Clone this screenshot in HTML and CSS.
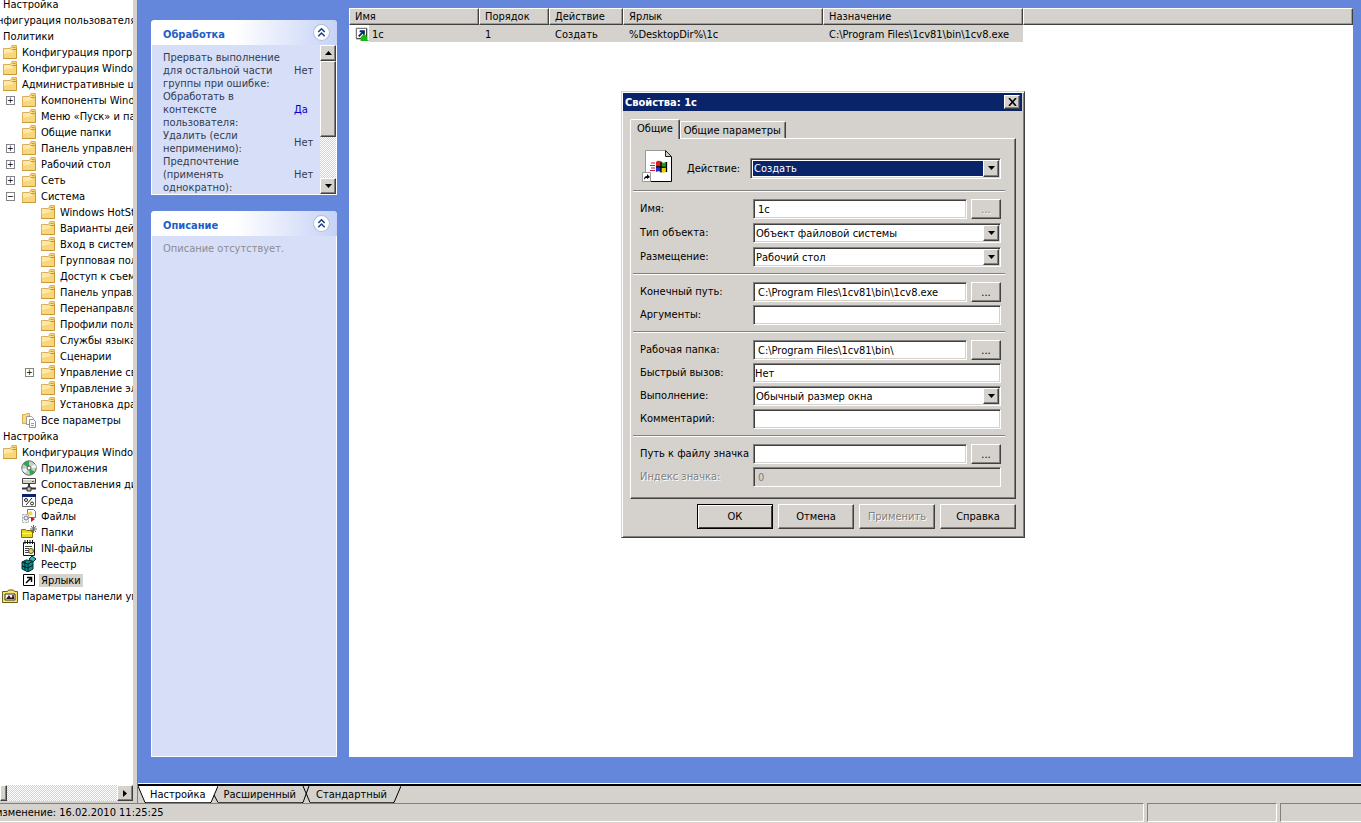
FILE: index.html
```html
<!DOCTYPE html>
<html lang="ru">
<head>
    <meta charset="UTF-8">
    <meta name="viewport" content="width=device-width, initial-scale=1.0">
    <title>Свойства: 1c</title>
    <link rel="stylesheet" href="styles.css">
</head>
<body>
    <svg class="sprite" aria-hidden="true">
        <symbol id="folder" viewBox="0 0 16 16">
            <path d="M1.500 4.500h7l1.500-3h4.500v13h-13z" fill="#f9d67a" stroke="#dcb05a"/>
            <path d="M2 5h7l2-2v5l-9 2z" fill="#fde9a8"/>
            <path d="M9.500 5.500h4.500M10.500 3.500h3" stroke="#a3a468" fill="none"/>
            <path d="M1 14.500h13.500V4" stroke="#c99a3c" fill="none"/>
        </symbol>
        <symbol id="all" viewBox="0 0 16 16">
            <path d="M1.500 2.500h3l1-1h3v10h-7z" fill="#fbdc7c" stroke="#d9ab4e"/>
            <path d="M5.500 4.500h5l2 2v6h-7z" fill="#fff" stroke="#a09a90"/>
            <path d="M8.500 7.500h4l2 2v6h-6z" fill="#fff" stroke="#8b93a5"/>
            <path d="M10 11.500h3M10 13.500h3" stroke="#7aa0d8"/>
        </symbol>
        <symbol id="disc" viewBox="0 0 16 16">
            <circle cx="8" cy="8" r="7.200" fill="#c4cfc9" stroke="#666"/>
            <path d="M8 8L2 4a7 7 0 0 1 6-3zM8 8l6 4a7 7 0 0 1-5 3z" fill="#2fa54c"/>
            <path d="M8 8l6-4a7 7 0 0 1 1 4zM8 8l-7 1a7 7 0 0 0 3 4z" fill="#eef6f2"/>
            <circle cx="8" cy="8" r="2" fill="#fff" stroke="#555"/>
        </symbol>
        <symbol id="drive" viewBox="0 0 16 16">
            <path d="M1.500 2.500h13v5h-13z" fill="#d4d0c8" stroke="#444"/>
            <path d="M2 3.500h12" stroke="#fff"/><path d="M11 5.500h2" stroke="#0a0"/>
            <path d="M8 8v4M1 12.500h14" stroke="#333" stroke-width="2"/>
            <path d="M6 11h4v4H6z" fill="#bbb" stroke="#333"/>
        </symbol>
        <symbol id="env" viewBox="0 0 16 16">
            <path d="M1.500 2.500h13v12h-13z" fill="#fff" stroke="#666"/>
            <path d="M1 2h14v3H1z" fill="#0a246a"/>
            <path d="M5 13l6-7" stroke="#222"/>
            <circle cx="5" cy="8" r="1.500" fill="none" stroke="#222"/><circle cx="11" cy="11.500" r="1.500" fill="none" stroke="#222"/>
        </symbol>
        <symbol id="files" viewBox="0 0 16 16">
            <path d="M6.500 1.500h6l2 2v6h-8z" fill="#fff" stroke="#777"/>
            <path d="M1.500 6.500h6v8h-6z" fill="#f8f4e0" stroke="#aaa" stroke-dasharray="2 1"/>
            <path d="M6 5l4-2 2 3-3 2z" fill="#f6d34a"/><circle cx="5" cy="10" r="2" fill="none" stroke="#6a78b0"/>
            <path d="M10 9l4 2-4 3z" fill="#c3162a"/>
        </symbol>
        <symbol id="folders" viewBox="0 0 16 16">
            <path d="M.500 5.500h4l1 1h6v7H.500z" fill="#e8d820" stroke="#807400"/>
            <path d="M1 9.500h10" stroke="#fff59a"/>
            <path d="M12.500 1v8M9 5h7M10 2l5 6M15 2l-5 6" stroke="#666"/>
        </symbol>
        <symbol id="ini" viewBox="0 0 16 16">
            <path d="M2.500 2.500h11v13h-11z" fill="#fff" stroke="#111"/>
            <path d="M4 0v4M6.500 0v4M9 0v4M11.500 0v4" stroke="#111"/>
            <path d="M4 6.500h7M4 8.500h4M4 10.500h4M4 12.500h4" stroke="#444"/>
            <circle cx="10" cy="11" r="2.500" fill="#e6d84a" stroke="#555"/>
        </symbol>
        <symbol id="registry" viewBox="0 0 16 16">
            <path d="M1 6l4-2 7 1v8l-5 3-6-3z" fill="#128a8a" stroke="#033"/>
            <path d="M8 3l3-3 4 3-3 3z" fill="#27b7b7" stroke="#033"/>
            <path d="M1 6l6 2 5-3M7 8v8M4 5v9M1 10l6 2 5-3" stroke="#022" fill="none"/>
        </symbol>
        <symbol id="shortcut" viewBox="0 0 16 16">
            <path d="M2.500 2.500h11v11h-11z" fill="#fff" stroke="#000"/>
            <path d="M5 11l5-5M6 5.500h4.500V10" stroke="#000" stroke-width="1.500" fill="none"/>
        </symbol>
        <symbol id="panel" viewBox="0 0 16 16">
            <path d="M.500 3.500h5l1 -1.500h5l1 1.500h3v11H.500z" fill="#f7e36a" stroke="#6b6218"/>
            <path d="M3 6h10v6H3z" fill="#fff" stroke="#333"/>
            <path d="M4 11l3-4 2 3 3-3v4z" fill="#222"/><path d="M10 7h2v2h-2z" fill="#d02020"/>
        </symbol>
        <symbol id="chevrons" viewBox="0 0 16 16">
            <circle cx="8" cy="8" r="7.500" fill="#fff" stroke="#b3bede"/>
            <path d="M5 7.500l3-3 3 3M5 11.500l3-3 3 3" fill="none" stroke="#1c3f8c" stroke-width="1.500"/>
        </symbol>
        <symbol id="down" viewBox="0 0 7 4"><path d="M0 0h7L3.500 4z"/></symbol>
    </svg>

    <main class="console">
        <nav class="tree-pane">
            <ul class="tree">
                <li><ul>
                    <li><span class="node">Настройка</span></li>
                </ul></li>
                <li><span class="node">Конфигурация пользователя</span>
                <ul>
                    <li><span class="node">Политики</span>
                    <ul>
                        <li><span class="node"><svg><use href="#folder"/></svg>Конфигурация программ</span></li>
                        <li><span class="node"><svg><use href="#folder"/></svg>Конфигурация Windows</span></li>
                        <li><span class="node"><svg><use href="#folder"/></svg>Административные шаблоны</span>
                        <ul>
                            <li><span class="node"><button class="expander">+</button><svg><use href="#folder"/></svg>Компоненты Windows</span></li>
                            <li><span class="node"><svg><use href="#folder"/></svg>Меню «Пуск» и панель задач</span></li>
                            <li><span class="node"><svg><use href="#folder"/></svg>Общие папки</span></li>
                            <li><span class="node"><button class="expander">+</button><svg><use href="#folder"/></svg>Панель управления</span></li>
                            <li><span class="node"><button class="expander">+</button><svg><use href="#folder"/></svg>Рабочий стол</span></li>
                            <li><span class="node"><button class="expander">+</button><svg><use href="#folder"/></svg>Сеть</span></li>
                            <li><span class="node"><button class="expander">−</button><svg><use href="#folder"/></svg>Система</span>
                            <ul>
                                <li><span class="node"><svg><use href="#folder"/></svg>Windows HotStart</span></li>
                                <li><span class="node"><svg><use href="#folder"/></svg>Варианты действий</span></li>
                                <li><span class="node"><svg><use href="#folder"/></svg>Вход в систему</span></li>
                                <li><span class="node"><svg><use href="#folder"/></svg>Групповая политика</span></li>
                                <li><span class="node"><svg><use href="#folder"/></svg>Доступ к съемным</span></li>
                                <li><span class="node"><svg><use href="#folder"/></svg>Панель управления</span></li>
                                <li><span class="node"><svg><use href="#folder"/></svg>Перенаправление</span></li>
                                <li><span class="node"><svg><use href="#folder"/></svg>Профили пользователей</span></li>
                                <li><span class="node"><svg><use href="#folder"/></svg>Службы языка</span></li>
                                <li><span class="node"><svg><use href="#folder"/></svg>Сценарии</span></li>
                                <li><span class="node"><button class="expander">+</button><svg><use href="#folder"/></svg>Управление связью</span></li>
                                <li><span class="node"><svg><use href="#folder"/></svg>Управление электропитанием</span></li>
                                <li><span class="node"><svg><use href="#folder"/></svg>Установка драйвера</span></li>
                            </ul></li>
                            <li><span class="node"><svg><use href="#all"/></svg>Все параметры</span></li>
                        </ul></li>
                    </ul></li>
                    <li><span class="node">Настройка</span>
                    <ul>
                        <li><span class="node"><svg><use href="#folder"/></svg>Конфигурация Windows</span>
                        <ul>
                            <li><span class="node"><svg><use href="#disc"/></svg>Приложения</span></li>
                            <li><span class="node"><svg><use href="#drive"/></svg>Сопоставления дисков</span></li>
                            <li><span class="node"><svg><use href="#env"/></svg>Среда</span></li>
                            <li><span class="node"><svg><use href="#files"/></svg>Файлы</span></li>
                            <li><span class="node"><svg><use href="#folders"/></svg>Папки</span></li>
                            <li><span class="node"><svg><use href="#ini"/></svg>INI-файлы</span></li>
                            <li><span class="node"><svg><use href="#registry"/></svg>Реестр</span></li>
                            <li><span class="node"><svg><use href="#shortcut"/></svg><span class="current">Ярлыки</span></span></li>
                        </ul></li>
                        <li><span class="node"><svg><use href="#panel"/></svg>Параметры панели управления</span></li>
                    </ul></li>
                </ul></li>
            </ul>
            <div class="hscroll">
                <span class="hthumb"></span>
                <button class="arrow" aria-label="Вправо"><svg width="4" height="7" viewBox="0 0 4 7"><path d="M0 0v7L4 3.500z"/></svg></button>
            </div>
        </nav>

        <section class="content">
            <div class="workspace">
                <aside class="side">
                    <section class="card">
                        <header>
                            <h2>Обработка</h2>
                            <button class="collapse" aria-label="Свернуть"><svg><use href="#chevrons"/></svg></button>
                        </header>
                        <div class="card-scroll">
                            <table class="options">
                                <tr><th scope="row">Прервать выполнение для остальной части группы при ошибке:</th><td>Нет</td></tr>
                                <tr><th scope="row">Обработать в контексте пользователя:</th><td class="yes">Да</td></tr>
                                <tr><th scope="row">Удалить (если неприменимо):</th><td>Нет</td></tr>
                                <tr><th scope="row">Предпочтение (применять однократно):</th><td>Нет</td></tr>
                            </table>
                            <div class="vscroll">
                                <button class="arrow up" aria-label="Вверх"><svg width="7" height="4"><use href="#down"/></svg></button>
                                <span class="vthumb"></span>
                                <button class="arrow" aria-label="Вниз"><svg width="7" height="4"><use href="#down"/></svg></button>
                            </div>
                        </div>
                    </section>
                    <section class="card grow">
                        <header>
                            <h2>Описание</h2>
                            <button class="collapse" aria-label="Свернуть"><svg><use href="#chevrons"/></svg></button>
                        </header>
                        <p>Описание отсутствует.</p>
                    </section>
                </aside>

                <div class="list">
                    <table class="items">
                        <colgroup>
                            <col class="c-name"><col class="c-order"><col class="c-action"><col class="c-link"><col class="c-link"><col>
                        </colgroup>
                        <thead>
                            <tr><th>Имя</th><th>Порядок</th><th>Действие</th><th>Ярлык</th><th>Назначение</th><th></th></tr>
                        </thead>
                        <tbody>
                            <tr>
                                <td class="name"><span class="file"><svg viewBox="0 0 16 16"><path d="M1.500 1.500h11v11h-11z" fill="#fff" stroke="#000"/><path d="M1 1.500h12M1.500 1v12" stroke="#888"/><path d="M4 10l5-5M5 4.500h4.500V9" stroke="#0a246a" stroke-width="2" fill="none"/><path d="M6 15v-4l4-4 3 4v2l2 2z" fill="#14b814"/></svg>1c</span></td>
                                <td>1</td>
                                <td>Создать</td>
                                <td>%DesktopDir%\1c</td>
                                <td>C:\Program Files\1cv81\bin\1cv8.exe</td>
                                <td class="blank"></td>
                            </tr>
                        </tbody>
                    </table>
                </div>
            </div>

            <div class="views">
                <svg width="8" height="18" viewBox="0 0 8 18"><path d="M0 0l7 17h1V0z" fill="#fff"/><path d="M0 0l7 16.500h1" stroke="#000" fill="none"/></svg>
                <button class="view active">Настройка</button>
                <svg width="8" height="18" viewBox="0 0 8 18"><path d="M0 0h8L1 17H0z" fill="#fff"/><path d="M0 16.500h1L8 0M4 9l4 7.500" stroke="#000" fill="none"/></svg>
                <button class="view">Расширенный</button>
                <svg width="8" height="18" viewBox="0 0 8 18"><path d="M0 16.500h1L7 0M1 0l7 16.500" stroke="#000" fill="none"/></svg>
                <button class="view">Стандартный</button>
                <svg width="8" height="18" viewBox="0 0 8 18"><path d="M0 16.500h1L8 0" stroke="#000" fill="none"/></svg>
            </div>
        </section>
    </main>

    <footer class="status">
        <span class="status-text"><span class="modified">изменение: 16.02.2010 11:25:25</span></span>
        <span class="status-mid"></span>
        <span class="status-end"></span>
    </footer>

    <form class="dialog" role="dialog" aria-label="Свойства: 1c">
        <header class="titlebar">
            <span>Свойства: 1c</span>
            <button type="button" class="close" aria-label="Закрыть"><svg width="9" height="8" viewBox="0 0 9 8"><path d="M1 0l7 8M8 0L1 8" stroke="#000" stroke-width="1.600"/></svg></button>
        </header>
        <div class="tabs">
            <button type="button" class="tab active">Общие</button>
            <button type="button" class="tab">Общие параметры</button>
        </div>
        <div class="page">
            <div class="action">
                <svg width="32" height="32" viewBox="0 0 32 32">
                    <path d="M3.500.500h20l6 6v25h-26z" fill="#fff" stroke="#999"/>
                    <path d="M23.500.500v6h6z" fill="#d4d0c8" stroke="#222"/>
                    <path d="M29.500 7v24.500H4" stroke="#000" fill="none"/>
                    <path d="M14 12c2-2 4-1 5 0v5c-2-1-3-1-5 0z" fill="#e02020"/>
                    <path d="M19 12c2 1 3 1 5 0v5c-2 1-3 1-5 0z" fill="#20a020"/>
                    <path d="M14 17c2-1 3-1 5 0v5c-2-1-3-1-5 0z" fill="#2030d0"/>
                    <path d="M19 17c2 1 3 1 5 0v5c-2 1-3 1-5 0z" fill="#f0d000"/>
                    <path d="M19 11.500v11M14 17c3-1.500 6 1.500 10 0M24.500 12v10" stroke="#000" stroke-width="1.300" fill="none"/>
                    <path d="M9 13h4M8 15.500h5M9 18h4M8 20.500h5" stroke="#c02040" stroke-width="1.200"/>
                    <path d="M.500 22.500h8v9h-8z" fill="#fff" stroke="#999"/>
                    <path d="M2 30c0-3 1-4 3-4v-2l3 3-3 2v-1c-1 0-2 0-3 2z"/>
                </svg>
                <label for="action">Действие:</label>
                <span class="combo selected">
                    <select id="action"><option>Создать</option></select>
                    <span class="drop"><svg width="7" height="4"><use href="#down"/></svg></span>
                </span>
            </div>
            <hr>
            <div class="group loose">
                <div class="row"><label for="name">Имя:</label><input id="name" type="text" value="1c"><button type="button" class="browse" disabled>...</button></div>
                <div class="row"><label for="type">Тип объекта:</label><span class="combo"><select id="type"><option>Объект файловой системы</option></select><span class="drop"><svg width="7" height="4"><use href="#down"/></svg></span></span></div>
                <div class="row"><label for="place">Размещение:</label><span class="combo"><select id="place"><option>Рабочий стол</option></select><span class="drop"><svg width="7" height="4"><use href="#down"/></svg></span></span></div>
            </div>
            <hr>
            <div class="group">
                <div class="row"><label for="target">Конечный путь:</label><input id="target" type="text" value="C:\Program Files\1cv81\bin\1cv8.exe"><button type="button" class="browse">...</button></div>
                <div class="row"><label for="args">Аргументы:</label><input id="args" type="text"></div>
            </div>
            <hr>
            <div class="group">
                <div class="row"><label for="workdir">Рабочая папка:</label><input id="workdir" type="text" value="C:\Program Files\1cv81\bin\"><button type="button" class="browse">...</button></div>
                <div class="row"><label for="hotkey">Быстрый вызов:</label><input id="hotkey" class="hotkey" type="text" value="Нет"></div>
                <div class="row"><label for="run">Выполнение:</label><span class="combo"><select id="run"><option>Обычный размер окна</option></select><span class="drop"><svg width="7" height="4"><use href="#down"/></svg></span></span></div>
                <div class="row"><label for="comment">Комментарий:</label><input id="comment" type="text"></div>
            </div>
            <hr>
            <div class="group">
                <div class="row"><label for="icon">Путь к файлу значка</label><input id="icon" type="text"><button type="button" class="browse">...</button></div>
                <div class="row"><label for="index" class="off">Индекс значка:</label><input id="index" type="text" value="0" disabled></div>
            </div>
        </div>
        <div class="actions">
            <button type="button" class="default">ОК</button>
            <button type="button">Отмена</button>
            <button type="button" disabled>Применить</button>
            <button type="button">Справка</button>
        </div>
    </form>
</body>
</html>
```
FILE: styles.css
```css
* {
    box-sizing: border-box;
}

body {
    margin: 0;
    height: 100vh;
    display: flex;
    flex-direction: column;
    overflow: hidden;
    background: #d5d2cd;
    color: #000;
    font: 11px/13px "DejaVu Sans Condensed", Tahoma, "DejaVu Sans", sans-serif;
}

button, input, select {
    font: inherit;
    color: inherit;
    margin: 0;
    border-radius: 0;
}

.sprite {
    display: none;
}

.console {
    flex: 1;
    min-height: 0;
    display: flex;
}

/* tree */

.tree-pane {
    width: 133px;
    flex: none;
    margin-bottom: 2px;
    display: flex;
    flex-direction: column;
    background: #fff;
    overflow: hidden;
}

.tree {
    flex: 1;
    min-height: 0;
    margin: -4px 0 0 -51px;
    padding: 0;
    list-style: none;
}

.tree ul {
    margin: 0;
    padding: 0 0 0 19px;
    list-style: none;
}

.node {
    display: flex;
    align-items: center;
    height: 16px;
    padding-left: 15px;
    white-space: nowrap;
}

.node svg {
    flex: none;
    width: 16px;
    height: 16px;
    margin-right: 4px;
}

.tree > li > .node,
.tree > li > ul > li > .node {
    padding-left: 35px;
}

.expander {
    flex: none;
    width: 9px;
    height: 9px;
    margin: 0 6px 0 -15px;
    padding: 0;
    border: 1px solid #848484;
    background: #fff;
    font-size: 9px;
    line-height: 7px;
}

.current {
    padding: 0 2px;
    margin-left: -2px;
    background: #d5d2cd;
}

.hscroll {
    display: flex;
    justify-content: space-between;
    height: 16px;
    background: repeating-conic-gradient(#fff 0 25%, #d5d2cd 0 50%) 0 0 / 2px 2px;
}

.arrow, .hthumb, .vthumb, .drop, .close {
    display: flex;
    align-items: center;
    justify-content: center;
    padding: 0;
    background: #d5d2cd;
    border: 1px solid;
    border-color: #fff #404040 #404040 #fff;
    box-shadow: inset -1px -1px #808080;
}

.arrow {
    width: 16px;
    height: 16px;
}

.hthumb {
    width: 7px;
}

/* blue area */

.content {
    flex: 1;
    min-width: 0;
    display: flex;
    flex-direction: column;
    margin-left: 4px;
    border-left: 1px solid #808080;
}

.workspace {
    flex: 1;
    min-height: 0;
    display: flex;
    gap: 12px;
    padding: 8px 8px 26px 13px;
    background: #6487dc;
    border-bottom: 1px solid #fff;
}

.side {
    width: 186px;
    flex: none;
    display: flex;
    flex-direction: column;
    gap: 16px;
    padding-top: 12px;
}

.card {
    background: #d6dff7;
    border: 1px solid #fff;
    border-top: 0;
    border-radius: 4px 4px 0 0;
}

.grow {
    flex: 1;
}

.card header {
    display: flex;
    align-items: center;
    justify-content: space-between;
    height: 25px;
    margin: 0 -1px;
    padding: 0 7px 0 12px;
    border-radius: 4px 4px 0 0;
    background: linear-gradient(90deg, #fff 45%, #c6d3f7);
}

.card h2 {
    margin: 4px 0 0;
    font-size: 11px;
    line-height: 13px;
    color: #215dc6;
}

.collapse {
    width: 17px;
    height: 17px;
    padding: 0;
    border: 0;
    background: none;
}

.collapse svg {
    display: block;
    width: 17px;
    height: 17px;
}

.card p {
    margin: 6px 11px;
    color: #8c8c94;
}

.card-scroll {
    display: flex;
    justify-content: space-between;
    height: 149px;
}

.options {
    margin: 6px 0 0 11px;
    width: 156px;
    height: 143px;
    border-collapse: collapse;
    color: #333c50;
}

.options th {
    width: 131px;
    padding: 0 10px 0 0;
    font-weight: normal;
    text-align: left;
}

.options td {
    padding: 0;
}

.options .yes {
    color: #00c;
}

.vscroll {
    width: 16px;
    display: flex;
    flex-direction: column;
    background: repeating-conic-gradient(#fff 0 25%, #d5d2cd 0 50%) 0 0 / 2px 2px;
}

.vthumb {
    height: 76px;
    margin-bottom: auto;
}

.up svg {
    transform: rotate(180deg);
}

.list {
    flex: 1;
    min-width: 0;
    background: #fff;
}

.items {
    width: 100%;
    table-layout: fixed;
    border-collapse: separate;
    border-spacing: 0;
}

.c-name { width: 130px; }
.c-order { width: 70px; }
.c-action { width: 74px; }
.c-link { width: 200px; }

.items th, .items td {
    height: 17px;
    padding: 0 5px;
    font-weight: normal;
    text-align: left;
    white-space: nowrap;
}

.items th {
    background: #d5d2cd;
    border: 1px solid;
    border-color: #fff #404040 #404040 #fff;
    box-shadow: inset -1px -1px #a09c94;
}

.items td {
    padding: 1px 6px 0;
    background: #d5d2cd;
}

.items .blank {
    background: #fff;
}

.items .name {
    background: linear-gradient(90deg, #fff 20px, #d5d2cd 20px);
}

.file {
    display: flex;
    align-items: center;
    gap: 2px;
}

.file svg {
    width: 15px;
    height: 15px;
}

/* view tabs */

.views {
    display: flex;
    height: 19px;
    border-top: 2px solid #000;
}

.view {
    height: 17px;
    padding: 0 6px;
    border: 0;
    border-bottom: 1px solid #404040;
    background: none;
}

.view.active {
    padding: 0 4px;
    background: #fff;
}

/* status bar */

.status {
    display: flex;
    gap: 3px;
    height: 20px;
    padding-bottom: 1px;
}

.status span {
    border-top: 1px solid #808080;
    border-bottom: 1px solid #fff;
}

.status .status-text {
    flex: 1;
    border-right: 1px solid #fff;
}

.status .modified {
    display: block;
    margin: 2px 0 0 -4px;
    border: 0;
}

.status-mid {
    width: 130px;
    border-left: 1px solid #808080;
    border-right: 1px solid #fff;
}

.status-end {
    width: 81px;
    border-left: 1px solid #808080;
}

/* dialog */

.dialog {
    position: absolute;
    left: 621px;
    top: 91px;
    width: 404px;
    padding: 1px 8px 8px;
    background: #d5d2cd;
    border: 1px solid;
    border-color: #d5d2cd #404040 #404040 #d5d2cd;
    box-shadow: inset 1px 1px #fff, inset -1px -1px #808080;
}

.titlebar {
    display: flex;
    align-items: center;
    justify-content: space-between;
    height: 18px;
    margin: 0 -6px 9px -7px;
    padding: 0 2px;
    background: #0a246a;
    color: #fff;
    font-weight: bold;
}

.close {
    width: 16px;
    height: 14px;
}

.tabs {
    display: flex;
    align-items: flex-end;
    height: 18px;
}

.tab {
    height: 17px;
    padding: 0 4px 0 3px;
    border: 1px solid;
    border-color: #fff #404040 transparent #fff;
    border-bottom: 0;
    border-radius: 2px 2px 0 0;
    box-shadow: inset -1px 0 #808080;
    background: #d5d2cd;
}

.tab.active {
    position: relative;
    height: 20px;
    margin-bottom: -1px;
    padding: 0 6px 3px;
}

.page {
    padding: 18px 14px 11px 2px;
    border: 1px solid;
    border-color: #fff #404040 #404040 #fff;
    box-shadow: inset -1px -1px #808080;
}

.page hr {
    height: 2px;
    margin: 6px -4px 7px 0;
    border: 0;
    border-top: 1px solid #808080;
    border-bottom: 1px solid #fff;
}

.action {
    display: flex;
    align-items: center;
    height: 22px;
    margin-bottom: 11px;
    padding-left: 9px;
}

.action > svg {
    flex: none;
    margin: -4px 13px 0 0;
}

.action .combo {
    flex: none;
    width: 251px;
    height: 21px;
    margin-left: auto;
}

.group {
    display: flex;
    flex-direction: column;
    gap: 3px;
    padding-left: 7px;
}

.loose {
    gap: 4px;
}

.row {
    display: flex;
    height: 20px;
}

.row label {
    flex: none;
    width: 113px;
    line-height: 20px;
    white-space: nowrap;
}

.row .off {
    color: #808080;
    text-shadow: 1px 1px #fff;
}

.row input, .combo {
    flex: 1;
    min-width: 0;
    background: #fff;
    border: 1px solid;
    border-color: #808080 #fff #fff #808080;
    box-shadow: inset 1px 1px #404040, inset -1px -1px #d5d2cd;
}

.row input {
    padding: 1px 4px;
}

.row .hotkey {
    padding-left: 1px;
}

.row input:disabled {
    background: #d5d2cd;
    color: #808080;
}

.combo {
    position: relative;
    display: flex;
    padding: 1px;
}

.combo select {
    flex: 1;
    min-width: 0;
    appearance: none;
    padding: 0 1px;
    border: 0;
    background: none;
}

.combo.selected select {
    border: 1px solid #fff;
    border-right-width: 16px;
    background: #0a246a;
    color: #fff;
}

.drop {
    position: absolute;
    top: 1px;
    right: 1px;
    bottom: 1px;
    width: 16px;
    pointer-events: none;
}

.browse, .actions button {
    padding: 0;
    background: #d5d2cd;
    border: 1px solid;
    border-color: #fff #404040 #404040 #fff;
    box-shadow: inset -1px -1px #808080;
}

.browse {
    width: 30px;
    margin-left: 4px;
}

.browse:disabled, .actions button:disabled {
    color: #808080;
    text-shadow: 1px 1px #fff;
}

.actions {
    display: flex;
    justify-content: flex-end;
    gap: 5px;
    margin-top: 5px;
}

.actions button {
    width: 76px;
    height: 25px;
}

.actions .default {
    border-color: #000;
    box-shadow: inset 1px 1px #fff, inset -1px -1px #404040;
}
```
